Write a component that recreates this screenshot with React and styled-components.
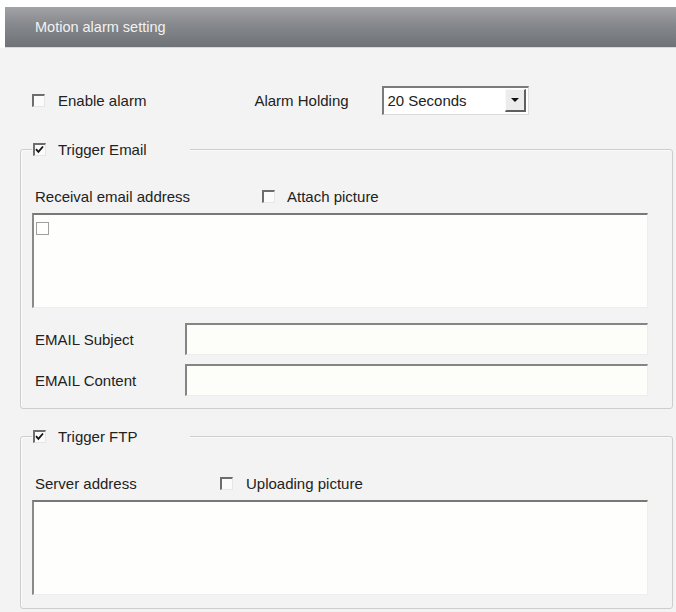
import React from "react";
import styled, { createGlobalStyle } from "styled-components";

const GlobalStyle = createGlobalStyle`
  html, body {
    margin: 0;
    padding: 0;
    background: #ffffff;
  }
  body {
    font-family: "Liberation Sans", Arial, sans-serif;
    font-size: 15px;
    color: #222;
  }
`;

const Page = styled.div`
  padding: 7px 0 0 5px;
  height: 612px;
  box-sizing: border-box;
  display: flex;
  flex-direction: column;
`;

const Header = styled.div`
  height: 41px;
  padding-left: 30px;
  display: flex;
  align-items: center;
  color: #f2f2f2;
  font-size: 14.5px;
  background: linear-gradient(#a1a3a7 0%, #85888c 45%, #6f7377 100%);
  border-bottom: 1px solid #d8d8d8;
  box-sizing: border-box;
`;

const Panel = styled.div`
  flex: 1;
  background: #f3f3f3;
  padding: 37px 0 0 0;
  margin-left: -5px;
  padding-left: 5px;
`;

const TopRow = styled.div`
  height: 30px;
  display: flex;
  align-items: center;
  padding-left: 27px;
`;

const Box = styled.span`
  position: relative;
  display: inline-block;
  flex: none;
  width: 13px;
  height: 13px;
  box-sizing: border-box;
  background: #fbfbfb;
  border-top: 2px solid #6d6d6d;
  border-left: 2px solid #6d6d6d;
  border-right: 1px solid #e6e6e6;
  border-bottom: 1px solid #e6e6e6;
  margin-left: ${(p) => p.$offset || 0}px;
`;

const CheckItem = styled.label`
  display: inline-flex;
  align-items: center;
  gap: ${(p) => p.$gap || 13}px;
  white-space: nowrap;
`;

const Tick = () => (
  <svg
    width="9"
    height="9"
    viewBox="0 0 9 9"
    style={{ position: "absolute", left: 0, top: 0 }}
  >
    <path d="M1 4.2 L3.4 6.8 L8 1.5" fill="none" stroke="#111" strokeWidth="1.8" />
  </svg>
);

const Check = ({ checked, label, gap, offset }) => (
  <CheckItem $gap={gap}>
    <Box $offset={offset}>{checked && <Tick />}</Box>
    {label}
  </CheckItem>
);

const HoldLabel = styled.span`
  margin-left: 108px;
  width: 128px;
`;

const Select = styled.div`
  width: 147px;
  height: 29px;
  box-sizing: border-box;
  display: flex;
  align-items: center;
  background: #ffffff;
  border-top: 2px solid #7b7b7b;
  border-left: 2px solid #7b7b7b;
  border-right: 1px solid #dcdcdc;
  border-bottom: 1px solid #dcdcdc;
  padding-left: 3px;
`;

const SelectText = styled.span`
  flex: 1;
`;

const DropButton = styled.span`
  width: 21px;
  height: 23px;
  margin-right: 2px;
  box-sizing: border-box;
  display: flex;
  align-items: center;
  justify-content: center;
  background: #ececec;
  border-top: 1px solid #fafafa;
  border-left: 1px solid #fafafa;
  border-right: 2px solid #5f5f5f;
  border-bottom: 2px solid #5f5f5f;
`;

const Arrow = styled.span`
  width: 0;
  height: 0;
  border-left: 4px solid transparent;
  border-right: 4px solid transparent;
  border-top: 4px solid #111;
`;

const Group = styled.fieldset`
  margin: ${(p) => p.$top}px 0 0 15px;
  width: 653px;
  box-sizing: border-box;
  padding: 30px 24px ${(p) => p.$bottom}px 11px;
  border: 1px solid #cdcdcd;
  border-radius: 3px;
  box-shadow: inset 1px 1px 0 #fbfbfb;
  min-width: 0;
`;

const Legend = styled.legend`
  padding: 0;
  width: 158px;
  height: 14px;
  display: flex;
  align-items: center;
  background: #f3f3f3;
`;

const FieldRow = styled.div`
  height: 20px;
  display: flex;
  align-items: center;
  margin-bottom: 7px;
`;

const FieldLabel = styled.span`
  width: ${(p) => p.$width}px;
  padding-left: 3px;
  box-sizing: border-box;
  flex: none;
  white-space: nowrap;
`;

const Area = styled.div`
  height: 95px;
  box-sizing: border-box;
  background: #fefefc;
  border-top: 2px solid #787878;
  border-left: 2px solid #8a8a8a;
  border-right: 1px solid #eeeeee;
  border-bottom: 1px solid #eeeeee;
  padding: 7px 0 0 2px;
`;

const SmallBox = styled.span`
  display: block;
  width: 13px;
  height: 13px;
  box-sizing: border-box;
  border: 1px solid #a0a0a0;
  background: #ffffff;
`;

const InputRow = styled.div`
  display: flex;
  align-items: center;
  margin-top: ${(p) => p.$top}px;
`;

const Input = styled.div`
  flex: 1;
  height: 32px;
  box-sizing: border-box;
  background: #fdfdf9;
  border-top: 2px solid #858585;
  border-left: 2px solid #858585;
  border-right: 1px solid #ededed;
  border-bottom: 1px solid #ededed;
`;

export default function App() {
  return (
    <>
      <GlobalStyle />
      <Page>
        <Header>Motion alarm setting</Header>
        <Panel>
          <TopRow>
            <Check label="Enable alarm" gap={13} />
            <HoldLabel>Alarm Holding</HoldLabel>
            <Select>
              <SelectText>20 Seconds</SelectText>
              <DropButton>
                <Arrow />
              </DropButton>
            </Select>
          </TopRow>

          <Group $top={27} $bottom={12}>
            <Legend>
              <Check checked label="Trigger Email" gap={12} offset={1} />
            </Legend>
            <FieldRow>
              <FieldLabel $width={230}>Receival email address</FieldLabel>
              <Check label="Attach picture" gap={12} />
            </FieldRow>
            <Area>
              <SmallBox />
            </Area>
            <InputRow $top={15}>
              <FieldLabel $width={153}>EMAIL Subject</FieldLabel>
              <Input />
            </InputRow>
            <InputRow $top={9}>
              <FieldLabel $width={153}>EMAIL Content</FieldLabel>
              <Input />
            </InputRow>
          </Group>

          <Group $top={20} $bottom={13}>
            <Legend>
              <Check checked label="Trigger FTP" gap={12} offset={1} />
            </Legend>
            <FieldRow>
              <FieldLabel $width={188}>Server address</FieldLabel>
              <Check label="Uploading picture" gap={13} />
            </FieldRow>
            <Area />
          </Group>
        </Panel>
      </Page>
    </>
  );
}
